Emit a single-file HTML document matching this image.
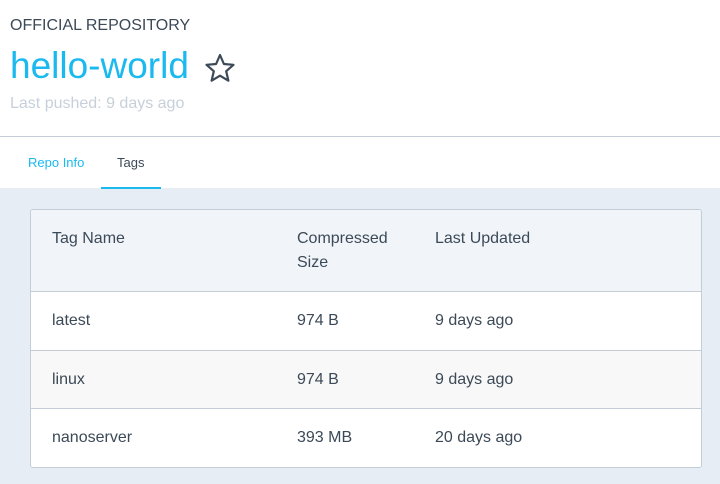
<!DOCTYPE html>
<html><head><style>
*{margin:0;padding:0;box-sizing:border-box}
body{width:720px;height:484px;background:#e6edf5;font-family:"Liberation Sans",sans-serif;overflow:hidden;position:relative}
.top{position:absolute;left:0;top:0;width:720px;height:188px;background:#fff}
.hr{position:absolute;left:0;top:136px;width:720px;height:1px;background:#c4cdd6}
.t{position:absolute;white-space:nowrap}
.tbl{position:absolute;left:30px;top:209px;width:672px;height:259px;border:1px solid #c4cdd6;border-radius:3px;background:#fff;overflow:hidden}
.row{position:absolute;left:0;width:100%;border-top:1px solid #c4cdd6}
.c{position:absolute;font-size:16px;color:#3c4957}
</style></head><body>
<div class="top"></div>
<div class="t" style="left:10px;top:17px;font-size:16px;color:#3c4957">OFFICIAL REPOSITORY</div>
<div class="t" style="left:10px;top:45px;font-size:37px;color:#1ab9ef">hello-world</div>
<svg style="position:absolute;left:204px;top:53px" width="32" height="30" viewBox="0 0 32 30"><polygon points="16,2 19.9,11 29.5,11.8 22.2,18.2 24.4,27.7 16,22.7 7.6,27.7 9.8,18.2 2.5,11.8 12.1,11" fill="none" stroke="#3c4957" stroke-width="2.2" stroke-linejoin="round"/></svg>
<div class="t" style="left:10px;top:95px;font-size:16px;color:#c7d0da">Last pushed: 9 days ago</div>
<div class="hr"></div>
<div class="t" style="left:28px;top:155px;font-size:13px;color:#1ab9ef">Repo Info</div>
<div class="t" style="left:117px;top:155px;font-size:13px;color:#3c4957">Tags</div>
<div style="position:absolute;left:101px;top:187px;width:60px;height:2px;background:#1ab9ef"></div>
<div class="tbl">
<div style="position:absolute;left:0;top:0;width:100%;height:82px;background:#f1f5fa"></div>
<div class="c" style="left:21px;top:20px">Tag Name</div>
<div class="c" style="left:266px;line-height:24px;top:17px">Compressed<br>Size</div>
<div class="c" style="left:404px;top:20px">Last Updated</div>
<div class="row" style="top:81px;height:59px"><div class="c" style="left:21px;top:20px">latest</div><div class="c" style="left:266px;top:20px">974 B</div><div class="c" style="left:404px;top:20px">9 days ago</div></div>
<div class="row" style="top:140px;height:58px;background:#f8f8f8"><div class="c" style="left:21px;top:20px">linux</div><div class="c" style="left:266px;top:20px">974 B</div><div class="c" style="left:404px;top:20px">9 days ago</div></div>
<div class="row" style="top:198px;height:60px"><div class="c" style="left:21px;top:20px">nanoserver</div><div class="c" style="left:266px;top:20px">393 MB</div><div class="c" style="left:404px;top:20px">20 days ago</div></div>
</div>
</body></html>
